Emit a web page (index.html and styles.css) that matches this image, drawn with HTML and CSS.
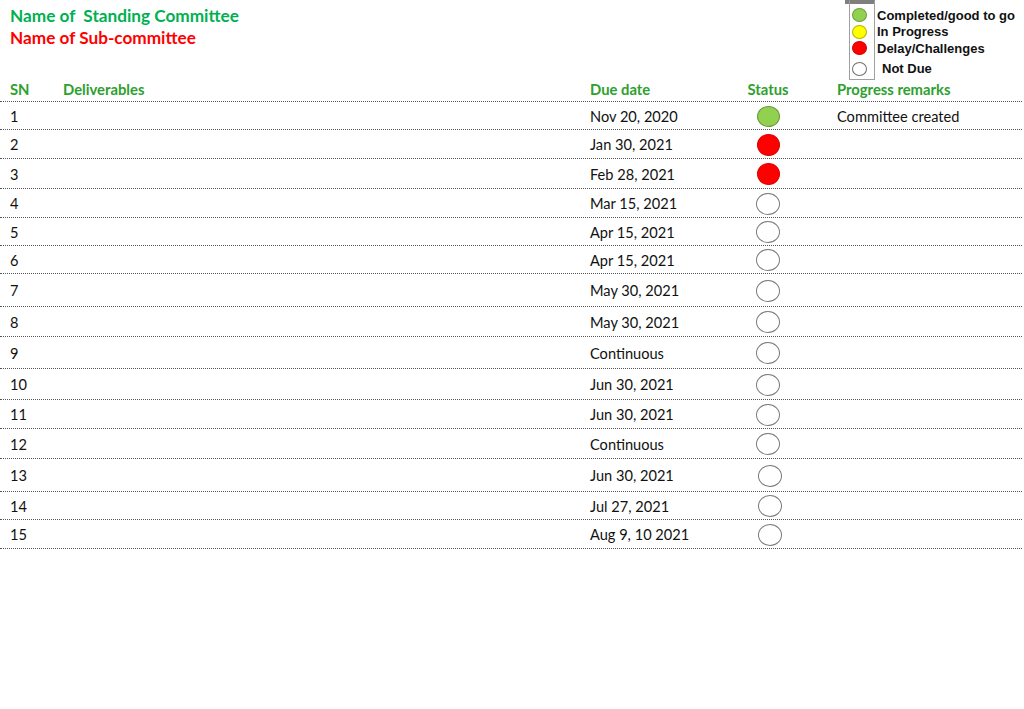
FILE: index.html
```html
<!DOCTYPE html>
<html>
<head>
<meta charset="utf-8">
<link rel="stylesheet" href="styles.css">
</head>
<body>
<div class="page">
  <div class="top">
    <div class="titles">
      <div class="t-green">Name of&nbsp; Standing Committee</div>
      <div class="t-red">Name of Sub-committee</div>
    </div>
    <div class="legend">
      <div class="legend-cap"></div>
      <div class="legend-box">
        <div class="lg-row"><span class="dot dot-green"></span><span class="lg-text">Completed/good to go</span></div>
        <div class="lg-row"><span class="dot dot-yellow"></span><span class="lg-text">In Progress</span></div>
        <div class="lg-row"><span class="dot dot-red"></span><span class="lg-text">Delay/Challenges</span></div>
        <div class="lg-row lg-last"><span class="dot dot-white"></span><span class="lg-text lg-shift">Not Due</span></div>
      </div>
    </div>
  </div>

  <div class="table">
    <div class="row head">
      <div class="c-sn">SN</div>
      <div class="c-del">Deliverables</div>
      <div class="c-date">Due date</div>
      <div class="c-status">Status</div>
      <div class="c-rem">Progress remarks</div>
    </div>
    <div class="row h28"><div class="c-sn">1</div><div class="c-del"></div><div class="c-date">Nov 20, 2020</div><div class="c-status"><span class="st st-green"></span></div><div class="c-rem">Committee created</div></div>
    <div class="row h29"><div class="c-sn">2</div><div class="c-del"></div><div class="c-date">Jan 30, 2021</div><div class="c-status"><span class="st st-red"></span></div><div class="c-rem"></div></div>
    <div class="row h30"><div class="c-sn">3</div><div class="c-del"></div><div class="c-date">Feb 28, 2021</div><div class="c-status"><span class="st st-red"></span></div><div class="c-rem"></div></div>
    <div class="row h29"><div class="c-sn">4</div><div class="c-del"></div><div class="c-date">Mar 15, 2021</div><div class="c-status"><span class="st"></span></div><div class="c-rem"></div></div>
    <div class="row h28"><div class="c-sn">5</div><div class="c-del"></div><div class="c-date">Apr 15, 2021</div><div class="c-status"><span class="st"></span></div><div class="c-rem"></div></div>
    <div class="row h28"><div class="c-sn">6</div><div class="c-del"></div><div class="c-date">Apr 15, 2021</div><div class="c-status"><span class="st"></span></div><div class="c-rem"></div></div>
    <div class="row h33"><div class="c-sn">7</div><div class="c-del"></div><div class="c-date">May 30, 2021</div><div class="c-status"><span class="st"></span></div><div class="c-rem"></div></div>
    <div class="row h30"><div class="c-sn">8</div><div class="c-del"></div><div class="c-date">May 30, 2021</div><div class="c-status"><span class="st"></span></div><div class="c-rem"></div></div>
    <div class="row h32"><div class="c-sn">9</div><div class="c-del"></div><div class="c-date">Continuous</div><div class="c-status"><span class="st"></span></div><div class="c-rem"></div></div>
    <div class="row h31"><div class="c-sn">10</div><div class="c-del"></div><div class="c-date">Jun 30, 2021</div><div class="c-status"><span class="st"></span></div><div class="c-rem"></div></div>
    <div class="row h29"><div class="c-sn">11</div><div class="c-del"></div><div class="c-date">Jun 30, 2021</div><div class="c-status"><span class="st"></span></div><div class="c-rem"></div></div>
    <div class="row h30"><div class="c-sn">12</div><div class="c-del"></div><div class="c-date">Continuous</div><div class="c-status"><span class="st"></span></div><div class="c-rem"></div></div>
    <div class="row h33"><div class="c-sn">13</div><div class="c-del"></div><div class="c-date">Jun 30, 2021</div><div class="c-status shift"><span class="st"></span></div><div class="c-rem"></div></div>
    <div class="row h28"><div class="c-sn">14</div><div class="c-del"></div><div class="c-date">Jul 27, 2021</div><div class="c-status shift"><span class="st"></span></div><div class="c-rem"></div></div>
    <div class="row h29"><div class="c-sn">15</div><div class="c-del"></div><div class="c-date">Aug 9, 10 2021</div><div class="c-status shift"><span class="st"></span></div><div class="c-rem"></div></div>
  </div>
</div>
</body>
</html>
```

FILE: styles.css
```css
* { box-sizing: border-box; }
html, body { margin: 0; padding: 0; background: #fff; }
body {
  font-family: Lato, "Open Sans", sans-serif;
  color: #111;
  width: 1024px;
  height: 709px;
  overflow: hidden;
}
.page { display: flex; flex-direction: column; }

.top {
  display: flex;
  justify-content: space-between;
  height: 80px;
}
.titles {
  padding: 5px 0 0 10px;
  font-weight: bold;
  font-size: 17.2px;
  line-height: 22px;
}
.t-green { color: #00b050; }
.t-red { color: #ff0000; }

.legend {
  width: 179px;
  display: flex;
  flex-direction: column;
  align-items: flex-start;
}
.legend-cap {
  width: 30px;
  height: 4px;
  background: #7f7f7f;
}
.legend-box {
  margin-left: 4px;
  margin-top: -4px;
  width: 26px;
  height: 82px;
  border: 1px solid #a0a0a0;
  border-top-color: #7f7f7f;
  padding-top: 6px;
  display: flex;
  flex-direction: column;
}
.lg-row {
  display: flex;
  align-items: center;
  height: 16.5px;
  white-space: nowrap;
}
.lg-last { margin-top: 4px; }
.dot {
  flex: none;
  width: 15px;
  height: 14px;
  border-radius: 50%;
  margin-left: 2px;
  border: 1px solid #8a8a8a;
}
.dot-green { background: #92d050; border-color: #6f9c3d; }
.dot-yellow { background: #ffff00; border-color: #b5b500; }
.dot-red { background: #ff0000; border-color: #d00000; }
.dot-white { background: #fff; border-color: #707070; }
.lg-text {
  font-family: "Liberation Sans", Arial, sans-serif;
  font-weight: bold;
  font-size: 13px;
  color: #111;
  margin-left: 10px;
}
.lg-shift { margin-left: 15px; }

.table {
  width: 1022px;
  display: flex;
  flex-direction: column;
}
.row {
  display: grid;
  grid-template-columns: 63px 527px 145px 66px 1fr;
  align-items: center;
  border-bottom: 1px dotted #555;
  font-size: 14.6px;
  padding-top: 1px;
}
.row > .c-sn { padding-left: 10px; }
.c-status { display: flex; justify-content: center; }
.c-status.shift { padding-left: 4px; }
.c-rem { padding-left: 36px; }

.head {
  height: 22px;
  color: #2ea02e;
  font-weight: bold;
  font-size: 14.8px;
  align-items: start;
  padding-top: 0;
}
.h28 { height: 28px; }
.h29 { height: 29px; }
.h30 { height: 30px; }
.h31 { height: 31px; }
.h32 { height: 32px; }
.h33 { height: 33px; }

.st {
  width: 24px;
  height: 22px;
  border-radius: 50%;
  border: 1.5px solid #7a7a7a;
  background: #fff;
}
.st-green { background: #92d050; border-color: #6d9a3c; height: 21px; width: 23px; }
.st-red { background: #ff0000; border-color: #e00000; width: 23px; }
```
